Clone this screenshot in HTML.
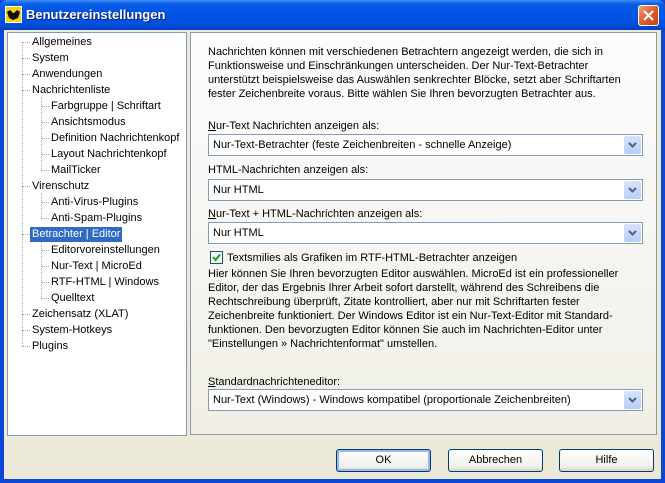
<!DOCTYPE html>
<html><head><meta charset="utf-8"><style>
*{margin:0;padding:0;box-sizing:border-box}
body{width:665px;height:483px;overflow:hidden;font-family:"Liberation Sans",sans-serif;font-size:11px;color:#000;background:#0a47d6;position:relative}
.abs{position:absolute}
#title{left:0;top:0;width:665px;height:30px;background:linear-gradient(#3d8df5 0,#0a5fe8 4px,#0054e3 12px,#0050dd 24px,#0040c8 30px);border-radius:7px 7px 0 0}
#ttext{left:26px;top:7px;color:#fff;font-weight:bold;font-size:13px;text-shadow:1px 1px #0a1e6e}
#close{left:638px;top:5px;width:21px;height:21px;border:1px solid #fff;border-radius:3px;background:linear-gradient(135deg,#f0a080,#e05a2a 50%,#c8401a)}
#body{left:4px;top:30px;width:657px;height:449px;background:#ece9d8}
#tree{left:7px;top:32px;width:180px;height:404px;background:#fff;border:1px solid #7f9db9}
.ti{position:absolute;white-space:nowrap;line-height:14px;height:15px;padding:0 2px}
.sel{background:#316ac5;color:#fff}
.dh{position:absolute;border-top:1px dotted #aaa;width:8px;height:0}
.dv{position:absolute;border-left:1px dotted #aaa;width:0}
#panel{left:190px;top:32px;width:467px;height:403px;border:1px solid #919b9c;background:linear-gradient(#fcfcfe,#f4f3ee 70%,#f1efe4)}
.t{position:absolute;left:208px;white-space:nowrap;line-height:14px}
.combo{position:absolute;left:208px;width:435px;height:22px;border:1px solid #7f9db9;background:#fff}
.combo span{position:absolute;left:4px;top:4px;white-space:nowrap}
.combo i{position:absolute;right:1px;top:1px;width:17px;height:18px;background:linear-gradient(#d8e4fb,#b8cdf8);border-radius:2px}
.btn{position:absolute;top:449px;width:95px;height:23px;border:1px solid #003c74;border-radius:3px;background:linear-gradient(#fff,#f0f0ea 80%,#d6d0c5);text-align:center;line-height:21px}
</style></head><body>
<div id="title" class="abs"></div>
<svg class="abs" style="left:5px;top:6px" width="17" height="17"><rect x="0" y="0" width="17" height="17" fill="#fff"/><rect x="1" y="1" width="15" height="15" fill="#f2d800"/><path d="M2 6 L5 4 L8 7 L9 7 L12 4 L15 6 L13 12 L8 14 L4 12 Z" fill="#111"/></svg>
<div id="ttext" class="abs">Benutzereinstellungen</div>
<div id="close" class="abs"><svg width="19" height="19"><path d="M5 5 L14 14 M14 5 L5 14" stroke="#fff" stroke-width="2.2"/></svg></div>
<div id="body" class="abs"></div>
<div id="tree" class="abs"></div>
<div class="dv" style="left:22px;top:42px;height:304px"></div>
<div class="dv" style="left:41px;top:97px;height:72px"></div>
<div class="dv" style="left:41px;top:193px;height:24px"></div>
<div class="dv" style="left:41px;top:241px;height:56px"></div>
<div id="tr"></div>
<div id="panel" class="abs"></div>
<div class="t" style="top:45px">Nachrichten können mit verschiedenen Betrachtern angezeigt werden, die sich in<br>Funktionsweise und Einschränkungen unterscheiden. Der Nur-Text-Betrachter<br>unterstützt beispielsweise das Auswählen senkrechter Blöcke, setzt aber Schriftarten<br>fester Zeichenbreite voraus. Bitte wählen Sie Ihren bevorzugten Betrachter aus.</div>
<div class="t" style="top:119px"><u>N</u>ur-Text Nachrichten anzeigen als:</div>
<div class="combo" style="top:134px"><span>Nur-Text-Betrachter (feste Zeichenbreiten - schnelle Anzeige)</span><i><svg width="17" height="18"><path d="M5 7 L8.5 10.5 L12 7" stroke="#4d6185" stroke-width="2" fill="none"/></svg></i></div>
<div class="t" style="top:163px">HTML-Nachrichten anzeigen als:</div>
<div class="combo" style="top:179px"><span>Nur HTML</span><i><svg width="17" height="18"><path d="M5 7 L8.5 10.5 L12 7" stroke="#4d6185" stroke-width="2" fill="none"/></svg></i></div>
<div class="t" style="top:207px"><u>N</u>ur-Text + HTML-Nachrichten anzeigen als:</div>
<div class="combo" style="top:222px"><span>Nur HTML</span><i><svg width="17" height="18"><path d="M5 7 L8.5 10.5 L12 7" stroke="#4d6185" stroke-width="2" fill="none"/></svg></i></div>
<svg class="abs" style="left:210px;top:251px" width="13" height="13"><rect x="0.5" y="0.5" width="12" height="12" fill="#f4f4f0" stroke="#1c5180"/><path d="M3 6 L5.5 9 L10 3.5" stroke="#21a121" stroke-width="2" fill="none"/></svg>
<div class="t" style="left:227px;top:251px">Textsmilies als Grafiken im RTF-HTML-Betrachter anzeigen</div>
<div class="t" style="top:267px">Hier können Sie Ihren bevorzugten Editor auswählen. MicroEd ist ein professioneller<br>Editor, der das Ergebnis Ihrer Arbeit sofort darstellt, während des Schreibens die<br>Rechtschreibung überprüft, Zitate kontrolliert, aber nur mit Schriftarten fester<br>Zeichenbreite funktioniert. Der Windows Editor ist ein Nur-Text-Editor mit Standard-<br>funktionen. Den bevorzugten Editor können Sie auch im Nachrichten-Editor unter<br>"Einstellungen » Nachrichtenformat" umstellen.</div>
<div class="t" style="top:375px"><u>S</u>tandardnachrichteneditor:</div>
<div class="combo" style="top:389px"><span>Nur-Text (Windows) - Windows kompatibel (proportionale Zeichenbreiten)</span><i><svg width="17" height="18"><path d="M5 7 L8.5 10.5 L12 7" stroke="#4d6185" stroke-width="2" fill="none"/></svg></i></div>
<div class="btn" style="left:336px;box-shadow:inset 0 0 0 2px #9cb7ef">OK</div>
<div class="btn" style="left:448px">Abbrechen</div>
<div class="btn" style="left:559px">Hilfe</div>
<script>
var items=[[0,"Allgemeines"],[0,"System"],[0,"Anwendungen"],[0,"Nachrichtenliste"],[1,"Farbgruppe | Schriftart"],[1,"Ansichtsmodus"],[1,"Definition Nachrichtenkopf"],[1,"Layout Nachrichtenkopf"],[1,"MailTicker"],[0,"Virenschutz"],[1,"Anti-Virus-Plugins"],[1,"Anti-Spam-Plugins"],[0,"Betrachter | Editor",1],[1,"Editorvoreinstellungen"],[1,"Nur-Text | MicroEd"],[1,"RTF-HTML | Windows"],[1,"Quelltext"],[0,"Zeichensatz (XLAT)"],[0,"System-Hotkeys"],[0,"Plugins"]];
var h="";items.forEach(function(it,i){var y=42+16*i;var x=it[0]?49:30;var lx=it[0]?41:22;
h+='<div class="dh" style="left:'+lx+'px;top:'+y+'px"></div>';
h+='<div class="ti'+(it[2]?' sel':'')+'" style="left:'+x+'px;top:'+(y-7)+'px">'+it[1]+'</div>';});
document.getElementById("tr").innerHTML=h;
</script>
</body></html>
